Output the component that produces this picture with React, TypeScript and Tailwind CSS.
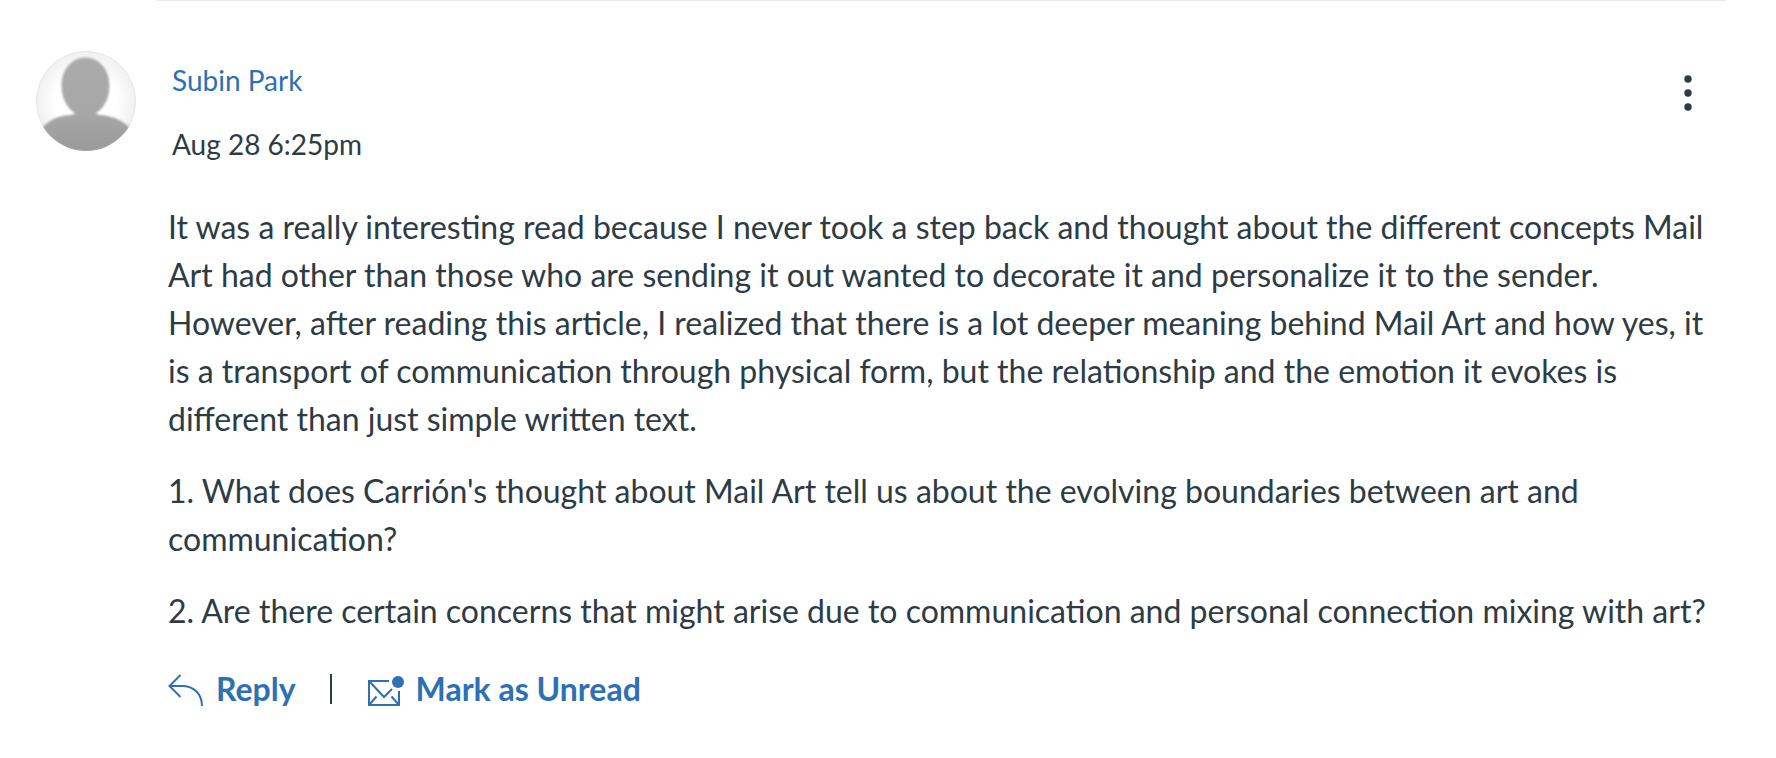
const paragraphs = [
  "It was a really interesting read because I never took a step back and thought about the different concepts Mail Art had other than those who are sending it out wanted to decorate it and personalize it to the sender. However, after reading this article, I realized that there is a lot deeper meaning behind Mail Art and how yes, it is a transport of communication through physical form, but the relationship and the emotion it evokes is different than just simple written text.",
  "1. What does Carrión's thought about Mail Art tell us about the evolving boundaries between art and communication?",
  "2. Are there certain concerns that might arise due to communication and personal connection mixing with art?",
];

function Avatar() {
  return (
    <svg className="size-[100px] shrink-0" viewBox="0 0 100 100" role="img" aria-label="Subin Park">
      <defs>
        <radialGradient id="backdrop" cx="0.5" cy="0.5" r="0.5">
          <stop offset="0.6" stopColor="#ffffff" />
          <stop offset="1" stopColor="#f0f0f0" />
        </radialGradient>
        <linearGradient id="figure" x1="0" y1="6" x2="0" y2="100" gradientUnits="userSpaceOnUse">
          <stop offset="0" stopColor="#ababab" />
          <stop offset="0.6" stopColor="#a7a7a7" />
          <stop offset="1" stopColor="#9a9a9a" />
        </linearGradient>
        <clipPath id="round">
          <circle cx="50" cy="50" r="50" />
        </clipPath>
        <filter id="soften">
          <feGaussianBlur stdDeviation="0.8" />
        </filter>
      </defs>
      <g clipPath="url(#round)">
        <rect width="100" height="100" fill="url(#backdrop)" />
        <path
          d="M49.500 6.500C35.500 6.500 25.500 19 25.500 34.500C25.500 47 31 57.500 39 62C38 64 34 64 29 64.500C19 66 11 71 5 78L-4 90V106H104V90L95 78C89 71 79 66 69 64.500C64 64 61 64 60 62C68 57.500 73.500 47 73.500 34.500C73.500 19 63.500 6.500 49.500 6.500Z"
          fill="url(#figure)"
          filter="url(#soften)"
        />
        <circle cx="50" cy="50" r="49.500" fill="none" stroke="#c7cdd1" strokeOpacity="0.25" />
      </g>
    </svg>
  );
}

function ReplyIcon() {
  return (
    <svg className="h-[34px] w-9" viewBox="0 0 36 34" fill="none" stroke="currentColor" strokeWidth="2" aria-hidden="true">
      <path d="M12.500 3L1.500 14L12.500 25M1.500 14H14C26 14 34 22 34 34" />
    </svg>
  );
}

function UnreadIcon() {
  return (
    <svg className="h-[34px] w-9" viewBox="0 0 36 34" fill="none" stroke="currentColor" strokeWidth="2" aria-hidden="true">
      <path d="M21 9H1V33H31V19M1 9L16 25L24 17M1 33L8.500 24.500M31 33L23.500 24.500" />
      <circle cx="30" cy="10" r="6" fill="currentColor" stroke="none" />
    </svg>
  );
}

export default function App() {
  return (
    <main className="bg-white pr-[50px] pl-9 font-['Lato',sans-serif] text-[#2d3b45]">
      <hr className="ml-[120px] border-t border-[#e8eaec]" />
      <article className="flex gap-8 pt-[50px]">
        <Avatar />
        <div className="min-w-0 grow">
          <header className="flex items-start justify-between pr-5 pl-1">
            <div className="flex flex-col gap-4 pt-[5px] text-[28px] leading-[48px]">
              <a href="#author" className="text-[#2d70b3]">
                Subin Park
              </a>
              <time>Aug 28 6:25pm</time>
            </div>
            <button type="button" aria-label="Manage discussion" className="mt-[22px] flex w-9 justify-center">
              <svg className="h-10 w-2" viewBox="0 0 8 40" fill="currentColor" aria-hidden="true">
                <circle cx="4" cy="6" r="3.700" />
                <circle cx="4" cy="20" r="3.700" />
                <circle cx="4" cy="34" r="3.700" />
              </svg>
            </button>
          </header>
          <div className="mt-[35px] flex flex-col gap-6 pr-4 text-[32px] leading-[48px]">
            {paragraphs.map((text) => (
              <p key={text}>{text}</p>
            ))}
          </div>
          <footer className="mt-[30px] flex items-center text-[32px] leading-[48px] font-bold text-[#2d70b3]">
            <button type="button" className="flex items-center gap-3">
              <ReplyIcon />
              Reply
            </button>
            <span className="mr-9 ml-[34px] h-[30px] w-0.5 bg-[#2d3b45]" />
            <button type="button" className="flex items-center gap-3">
              <UnreadIcon />
              Mark as Unread
            </button>
          </footer>
        </div>
      </article>
    </main>
  );
}
